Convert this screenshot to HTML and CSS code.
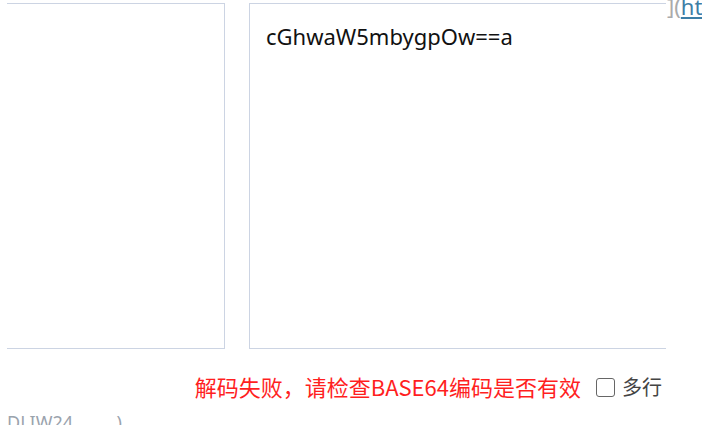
FILE: index.html
```html
<!DOCTYPE html>
<html lang="zh-CN">
<head>
<meta charset="utf-8">
<title>BASE64</title>
<link rel="stylesheet" href="styles.css">
</head>
<body>
<div class="page">
  <div class="top">
    <div class="stage">
      <div class="panes">
        <div class="pane pane-left"></div>
        <div class="pane pane-right">cGhwaW5mbygpOw==a</div>
      </div>
      <div class="status">
        <span class="error">解码失败，请检查BASE64编码是否有效</span>
        <label class="multi"><span class="box"></span><span class="multi-text">多行</span></label>
      </div>
    </div>
    <div class="side">](<span class="side-link">ht</span></div>
  </div>
  <p class="bg-text">DLIW24.........)</p>
</div>
</body>
</html>
```
FILE: styles.css
```css
html, body {
  margin: 0;
  padding: 0;
  background: #fff;
  overflow: hidden;
}
.page {
  width: 702px;
  height: 425px;
  overflow: hidden;
  font-family: "Noto Sans", "Noto Sans CJK SC", sans-serif;
}
.top {
  display: flex;
  padding-left: 7px;
}
.stage {
  width: 659px;
  flex: none;
  overflow: hidden;
  padding-top: 3px;
}
.panes {
  display: flex;
  gap: 24px;
  margin-left: -30px;
}
.pane {
  flex: none;
  height: 344px;
  border: 1px solid #ccd4e3;
  box-sizing: content-box;
  background: #fff;
}
.pane-left {
  width: 246px;
}
.pane-right {
  width: 440px;
  padding: 16px 16px;
  height: 312px;
  font-size: 22px;
  line-height: 32px;
  color: #111;
}
.status {
  display: flex;
  justify-content: flex-end;
  align-items: center;
  padding: 22px 4px 0 0;
}
.error {
  color: #ff1f1f;
  font-size: 22px;
  font-family: "Noto Sans CJK SC", sans-serif;
  line-height: 30px;
}
.multi {
  display: flex;
  align-items: center;
  margin-left: 15px;
  color: #444;
  font-size: 20px;
  font-family: "Noto Sans CJK SC", sans-serif;
}
.box {
  width: 17px;
  height: 17px;
  border: 1.5px solid #666;
  border-radius: 3px;
  margin-right: 7px;
  margin-top: 3px;
}
.multi-text {
  margin-right: 0;
}
.side {
  margin-top: -9px;
  margin-left: 1px;
  font-size: 22px;
  color: #aaa;
  white-space: nowrap;
  font-family: "Noto Sans", sans-serif;
}
.side-link {
  color: #3d7ea6;
  text-decoration: underline;
}
.bg-text {
  margin: 0;
  padding: 9px 0 0 7px;
  font-size: 18px;
  color: #9aa3ad;
}
```
